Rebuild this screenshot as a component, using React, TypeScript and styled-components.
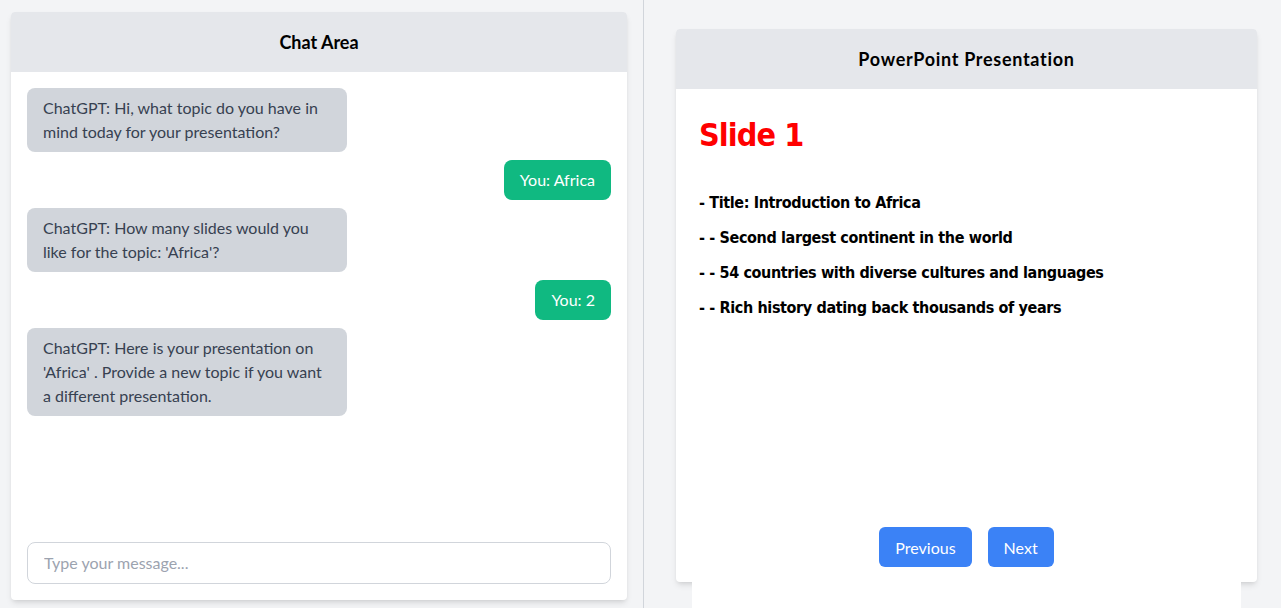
import React from "react";
import styled, { createGlobalStyle } from "styled-components";

const Global = createGlobalStyle`
  html, body { margin: 0; padding: 0; }
  body {
    background: #f3f4f6;
    font-family: Lato, "Liberation Sans", sans-serif;
    overflow: hidden;
  }
  * { box-sizing: border-box; }
`;

const Page = styled.div`
  display: flex;
  height: 608px;
  width: 1281px;
`;

const LeftColumn = styled.div`
  width: 644px;
  flex-shrink: 0;
  padding: 12px 16px 8px 11px;
  border-right: 1px solid #d1d5db;
  display: flex;
`;

const RightColumn = styled.div`
  flex: 1;
  padding: 29px 24px 0 32px;
  display: flex;
  flex-direction: column;
`;

const ChatPanel = styled.div`
  flex: 1;
  background: #ffffff;
  border-radius: 4px;
  box-shadow: 0 4px 6px -1px rgba(0,0,0,0.1), 0 2px 4px -2px rgba(0,0,0,0.1);
  display: flex;
  flex-direction: column;
  overflow: hidden;
`;

const PanelHeader = styled.div<{ spacing?: number }>`
  height: 60px;
  background: #e5e7eb;
  display: flex;
  align-items: center;
  justify-content: center;
  font-weight: 700;
  font-size: 18px;
  letter-spacing: ${(p) => p.spacing ?? 0}px;
  color: #000;
  flex-shrink: 0;
`;

const Messages = styled.div`
  flex: 1;
  padding: 16px;
  display: flex;
  flex-direction: column;
  gap: 8px;
`;

const Bubble = styled.div<{ mine?: boolean }>`
  align-self: ${(p) => (p.mine ? "flex-end" : "flex-start")};
  max-width: 320px;
  padding: 8px 16px;
  border-radius: 8px;
  font-size: 16px;
  line-height: 24px;
  background: ${(p) => (p.mine ? "#10b981" : "#d1d5db")};
  color: ${(p) => (p.mine ? "#ffffff" : "#374151")};
`;

const InputWrap = styled.div`
  padding: 0 16px 16px;
`;

const Input = styled.input`
  width: 100%;
  height: 42px;
  border: 1px solid #d1d5db;
  border-radius: 8px;
  padding: 0 16px 2px;
  font-family: inherit;
  font-size: 16px;
  color: #374151;
  outline: none;
  &::placeholder { color: #9ca3af; }
`;

const SlideCard = styled.div`
  height: 553px;
  flex-shrink: 0;
  background: #ffffff;
  border-radius: 4px;
  box-shadow: 0 4px 6px -1px rgba(0,0,0,0.1), 0 2px 4px -2px rgba(0,0,0,0.1);
  display: flex;
  flex-direction: column;
  overflow: hidden;
`;

const SlideBody = styled.div`
  flex: 1;
  padding: 24px 23px 15px;
  display: flex;
  flex-direction: column;
`;

const SlideTitle = styled.h1`
  margin: 0 0 34px;
  font-family: "DejaVu Sans Condensed", "DejaVu Sans", sans-serif;
  font-stretch: condensed;
  font-weight: 700;
  font-size: 32px;
  letter-spacing: -0.9px;
  line-height: 44px;
  color: #ff0000;
`;

const Bullet = styled.p`
  margin: 0 0 11px;
  font-family: "DejaVu Sans Condensed", "DejaVu Sans", sans-serif;
  font-stretch: condensed;
  font-weight: 700;
  font-size: 16px;
  letter-spacing: -0.37px;
  line-height: 24px;
  color: #000;
`;

const Nav = styled.div`
  margin-top: auto;
  display: flex;
  justify-content: center;
  gap: 16px;
`;

const NavButton = styled.button`
  height: 40px;
  padding: 0 16px;
  border: none;
  border-radius: 6px;
  background: #3b82f6;
  color: #ffffff;
  font-family: Lato, "Liberation Sans", sans-serif;
  font-size: 16px;
`;

const Overflow = styled.div`
  height: 40px;
  margin: 0 16px;
  background: #ffffff;
`;

const messages = [
  { mine: false, text: "ChatGPT: Hi, what topic do you have in mind today for your presentation?" },
  { mine: true, text: "You: Africa" },
  { mine: false, text: "ChatGPT: How many slides would you like for the topic: 'Africa'?" },
  { mine: true, text: "You: 2" },
  { mine: false, text: "ChatGPT: Here is your presentation on 'Africa' . Provide a new topic if you want a different presentation." },
];

const bullets = [
  "- Title: Introduction to Africa",
  "- - Second largest continent in the world",
  "- - 54 countries with diverse cultures and languages",
  "- - Rich history dating back thousands of years",
];

export default function App() {
  return (
    <>
      <Global />
      <Page>
        <LeftColumn>
          <ChatPanel>
            <PanelHeader>Chat Area</PanelHeader>
            <Messages>
              {messages.map((m, i) => (
                <Bubble key={i} mine={m.mine}>{m.text}</Bubble>
              ))}
            </Messages>
            <InputWrap>
              <Input placeholder="Type your message..." />
            </InputWrap>
          </ChatPanel>
        </LeftColumn>
        <RightColumn>
          <SlideCard>
            <PanelHeader spacing={0.7}>PowerPoint Presentation</PanelHeader>
            <SlideBody>
              <SlideTitle>Slide 1</SlideTitle>
              {bullets.map((b, i) => (
                <Bullet key={i}>{b}</Bullet>
              ))}
              <Nav>
                <NavButton>Previous</NavButton>
                <NavButton>Next</NavButton>
              </Nav>
            </SlideBody>
          </SlideCard>
          <Overflow />
        </RightColumn>
      </Page>
    </>
  );
}
